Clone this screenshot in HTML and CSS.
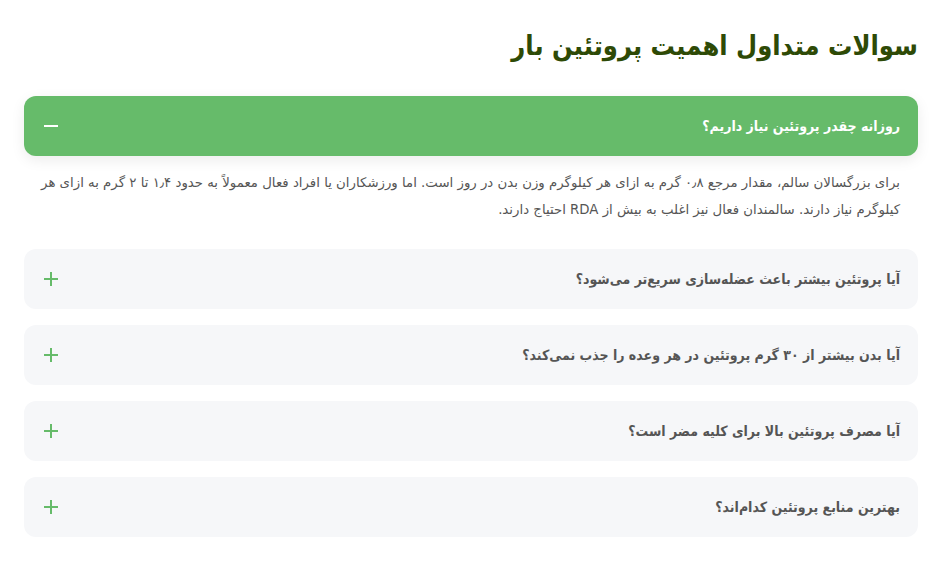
FILE: index.html
```html
<!DOCTYPE html>
<html lang="fa" dir="rtl">
<head>
    <meta charset="UTF-8">
    <meta name="viewport" content="width=device-width, initial-scale=1.0">
    <title>سوالات متداول پروتئین بار</title>
    <link rel="stylesheet" href="styles.css">
</head>
<body>
    <section class="faq">
        <h2 class="faq-title">سوالات متداول اهمیت پروتئین بار</h2>

        <div class="faq-item open">
            <button class="faq-question">
                <span>روزانه چقدر پروتئین نیاز داریم؟</span>
                <span class="faq-icon minus"></span>
            </button>
            <div class="faq-answer">
                برای بزرگسالان سالم، مقدار مرجع ۰٫۸ گرم به ازای هر کیلوگرم وزن بدن در روز است. اما ورزشکاران یا افراد فعال معمولاً به حدود ۱٫۴ تا ۲ گرم به ازای هر کیلوگرم نیاز دارند. سالمندان فعال نیز اغلب به بیش از RDA احتیاج دارند.
            </div>
        </div>

        <div class="faq-item">
            <button class="faq-question">
                <span>آیا پروتئین بیشتر باعث عضله‌سازی سریع‌تر می‌شود؟</span>
                <span class="faq-icon plus"></span>
            </button>
        </div>

        <div class="faq-item">
            <button class="faq-question">
                <span>آیا بدن بیشتر از ۳۰ گرم پروتئین در هر وعده را جذب نمی‌کند؟</span>
                <span class="faq-icon plus"></span>
            </button>
        </div>

        <div class="faq-item">
            <button class="faq-question">
                <span>آیا مصرف پروتئین بالا برای کلیه مضر است؟</span>
                <span class="faq-icon plus"></span>
            </button>
        </div>

        <div class="faq-item">
            <button class="faq-question">
                <span>بهترین منابع پروتئین کدام‌اند؟</span>
                <span class="faq-icon plus"></span>
            </button>
        </div>
    </section>
</body>
</html>
```

FILE: styles.css
```css
body {
    margin: 0;
    background: #fff;
    font-family: "DejaVu Sans", sans-serif;
}
.faq {
    margin: 0 26px 0 24px;
    padding-top: 24px;
}
.faq-title {
    margin: 0 0 28px;
    font-family: "DejaVu Sans Condensed", "DejaVu Sans", sans-serif;
    font-size: 27px;
    line-height: 44px;
    font-weight: bold;
    color: #2e4a06;
}
.faq-item {
    margin-bottom: 16px;
}
.faq-question {
    width: 100%;
    height: 60px;
    display: flex;
    align-items: center;
    justify-content: space-between;
    padding: 0 18px;
    border: none;
    border-radius: 12px;
    background: #f6f7f9;
    color: #555;
    font-family: "DejaVu Sans Condensed", "DejaVu Sans", sans-serif;
    font-size: 14px;
    font-weight: bold;
    cursor: pointer;
    box-sizing: border-box;
}
.faq-item.open .faq-question {
    background: #66bb6a;
    color: #fff;
    box-shadow: 0 4px 14px rgba(0,0,0,0.08);
}
.faq-icon {
    position: relative;
    width: 14px;
    height: 14px;
    margin-left: 2px;
}
.faq-icon::before,
.faq-icon::after {
    content: "";
    position: absolute;
    background: #66bb6a;
}
.faq-icon::before {
    left: 0;
    top: 6px;
    width: 14px;
    height: 2px;
}
.faq-icon.plus::after {
    left: 6px;
    top: 0;
    width: 2px;
    height: 14px;
}
.faq-item.open .faq-icon::before { background: #fff; }
.faq-answer {
    padding: 13px 18px 10px 16px;
    font-size: 13.3px;
    line-height: 27px;
    color: #555;
}
```
